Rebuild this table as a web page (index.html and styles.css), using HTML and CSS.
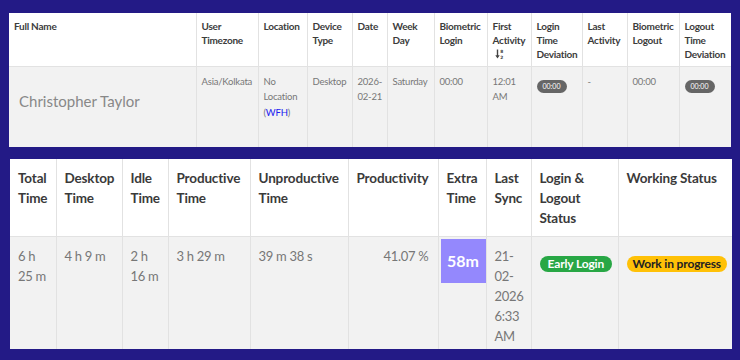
FILE: index.html
```html
<!DOCTYPE html>
<html>
<head>
<meta charset="utf-8">
<link rel="stylesheet" href="styles.css">
</head>
<body>
<div class="page">
  <table class="grid top">
    <colgroup>
      <col style="width:187px"><col style="width:62px"><col style="width:49px"><col style="width:45px"><col style="width:35px"><col style="width:47px"><col style="width:53px"><col style="width:44px"><col style="width:51px"><col style="width:45px"><col style="width:52px"><col style="width:52px">
    </colgroup>
    <thead>
      <tr class="head-row">
        <th>Full Name</th>
        <th>User Timezone</th>
        <th>Location</th>
        <th>Device Type</th>
        <th>Date</th>
        <th>Week Day</th>
        <th>Biometric Login</th>
        <th>First Activity
          <span class="sort"><svg width="9" height="10" viewBox="0 0 9 10"><path d="M2.5 0.5V8" stroke="#444" stroke-width="1.4"/><path d="M0.3 6.3L2.5 9.6L4.7 6.3Z" fill="#444"/><text x="5.3" y="4" font-size="4.4" font-weight="bold" fill="#444" font-family="DejaVu Sans">8</text><text x="5.3" y="9.6" font-size="4.4" font-weight="bold" fill="#444" font-family="DejaVu Sans">2</text></svg></span>
        </th>
        <th>Login Time Deviation</th>
        <th>Last Activity</th>
        <th>Biometric Logout</th>
        <th>Logout Time Deviation</th>
      </tr>
    </thead>
    <tbody>
      <tr class="body-row">
        <td class="name">Christopher Taylor</td>
        <td>Asia/Kolkata</td>
        <td>No Location <span class="wfh">(<a>WFH</a>)</span></td>
        <td>Desktop</td>
        <td>2026-02-21</td>
        <td>Saturday</td>
        <td>00:00</td>
        <td>12:01 AM</td>
        <td><span class="pill">00:00</span></td>
        <td>-</td>
        <td>00:00</td>
        <td><span class="pill">00:00</span></td>
      </tr>
    </tbody>
  </table>

  <table class="grid bottom">
    <colgroup>
      <col style="width:46px"><col style="width:66px"><col style="width:46px"><col style="width:82px"><col style="width:98px"><col style="width:90px"><col style="width:48px"><col style="width:45px"><col style="width:87px"><col style="width:114px">
    </colgroup>
    <thead>
      <tr class="head-row">
        <th>Total Time</th>
        <th>Desktop Time</th>
        <th>Idle Time</th>
        <th>Productive Time</th>
        <th>Unproductive Time</th>
        <th>Productivity</th>
        <th>Extra Time</th>
        <th>Last Sync</th>
        <th>Login &amp; Logout Status</th>
        <th>Working Status</th>
      </tr>
    </thead>
    <tbody>
      <tr class="body-row">
        <td>6 h 25 m</td>
        <td>4 h 9 m</td>
        <td>2 h 16 m</td>
        <td>3 h 29 m</td>
        <td>39 m 38 s</td>
        <td class="right">41.07 %</td>
        <td class="extra"><span class="extra-box">58m</span></td>
        <td>21-02-2026 6:33 AM</td>
        <td><span class="badge green">Early Login</span></td>
        <td><span class="badge yellow">Work in progress</span></td>
      </tr>
    </tbody>
  </table>
</div>
</body>
</html>
```

FILE: styles.css
```css
html, body {
  margin: 0;
  padding: 0;
  background: #231a86;
}
body {
  width: 740px;
  height: 360px;
  overflow: hidden;
  font-family: "Lato", "Open Sans", sans-serif;
}
.page {
  display: flex;
  flex-direction: column;
  align-items: flex-start;
  padding: 13px 0 0 9px;
  gap: 12px;
}
.grid {
  border-collapse: collapse;
  table-layout: fixed;
  width: 722px;
}
.grid th, .grid td {
  border: 1px solid #e2e2e2;
  vertical-align: top;
  text-align: left;
}
.grid th { background: #ffffff; }
.grid td { background: #f2f2f2; }
.top .head-row { height: 53px; }
.top .body-row { height: 81px; }
.top th {
  font-size: 10px;
  line-height: 14px;
  font-weight: bold;
  letter-spacing: -0.25px;
  color: #3c3c3c;
  padding: 6px 3px 0 5px;
  border-top: none;
}
.top th:first-child, .top td:first-child { border-left: none; }
.top th:last-child, .top td:last-child { border-right: none; }
.top td {
  font-size: 9.5px;
  line-height: 15px;
  letter-spacing: -0.2px;
  color: #777;
  padding: 7px 3px 0 5px;
  border-bottom: none;
}
.top td.name {
  font-size: 15px;
  line-height: 18px;
  letter-spacing: 0;
  color: #888;
  padding: 25px 10px 0 10px;
}
.wfh { display: block; margin-top: 1px; }
.wfh a { color: #2020f0; }
.sort { display: block; height: 12px; padding-top: 1px; padding-left: 2px; }
.pill {
  display: inline-block;
  vertical-align: top;
  margin-top: 6px;
  background: #666;
  color: #fff;
  border-radius: 7px;
  font-size: 7px;
  line-height: 13px;
  letter-spacing: 0;
  padding: 0 6px;
}
.bottom { margin-left: 1px; }
.bottom .head-row { height: 77px; }
.bottom .body-row { height: 113px; }
.bottom th {
  font-size: 13.5px;
  line-height: 20px;
  font-weight: bold;
  letter-spacing: -0.15px;
  color: #3a3a3a;
  padding: 9px 4px 0 8px;
  border-top: none;
}
.bottom th:first-child, .bottom td:first-child { border-left: none; }
.bottom th:last-child, .bottom td:last-child { border-right: none; }
.bottom td {
  font-size: 13px;
  line-height: 20px;
  letter-spacing: -0.3px;
  color: #777;
  padding: 9px 4px 0 8px;
  border-bottom: none;
}
.bottom td.right { text-align: right; padding-right: 9px; }
.bottom td.extra { padding: 2px 1px 0 2px; }
.extra-box {
  display: flex;
  align-items: center;
  justify-content: center;
  width: 45px;
  height: 44px;
  background: #9488fd;
  color: #fff;
  font-weight: bold;
  font-size: 16px;
  letter-spacing: 0;
}
.badge {
  display: inline-block;
  vertical-align: top;
  white-space: nowrap;
  margin-top: 10px;
  font-size: 12px;
  line-height: 16px;
  font-weight: bold;
  letter-spacing: -0.15px;
  border-radius: 8px;
  padding: 0 6px;
}
.green { background: #28a745; color: #fff; padding: 0 8px; }
.yellow { background: #ffc107; color: #222; padding: 0 6px; }
```
